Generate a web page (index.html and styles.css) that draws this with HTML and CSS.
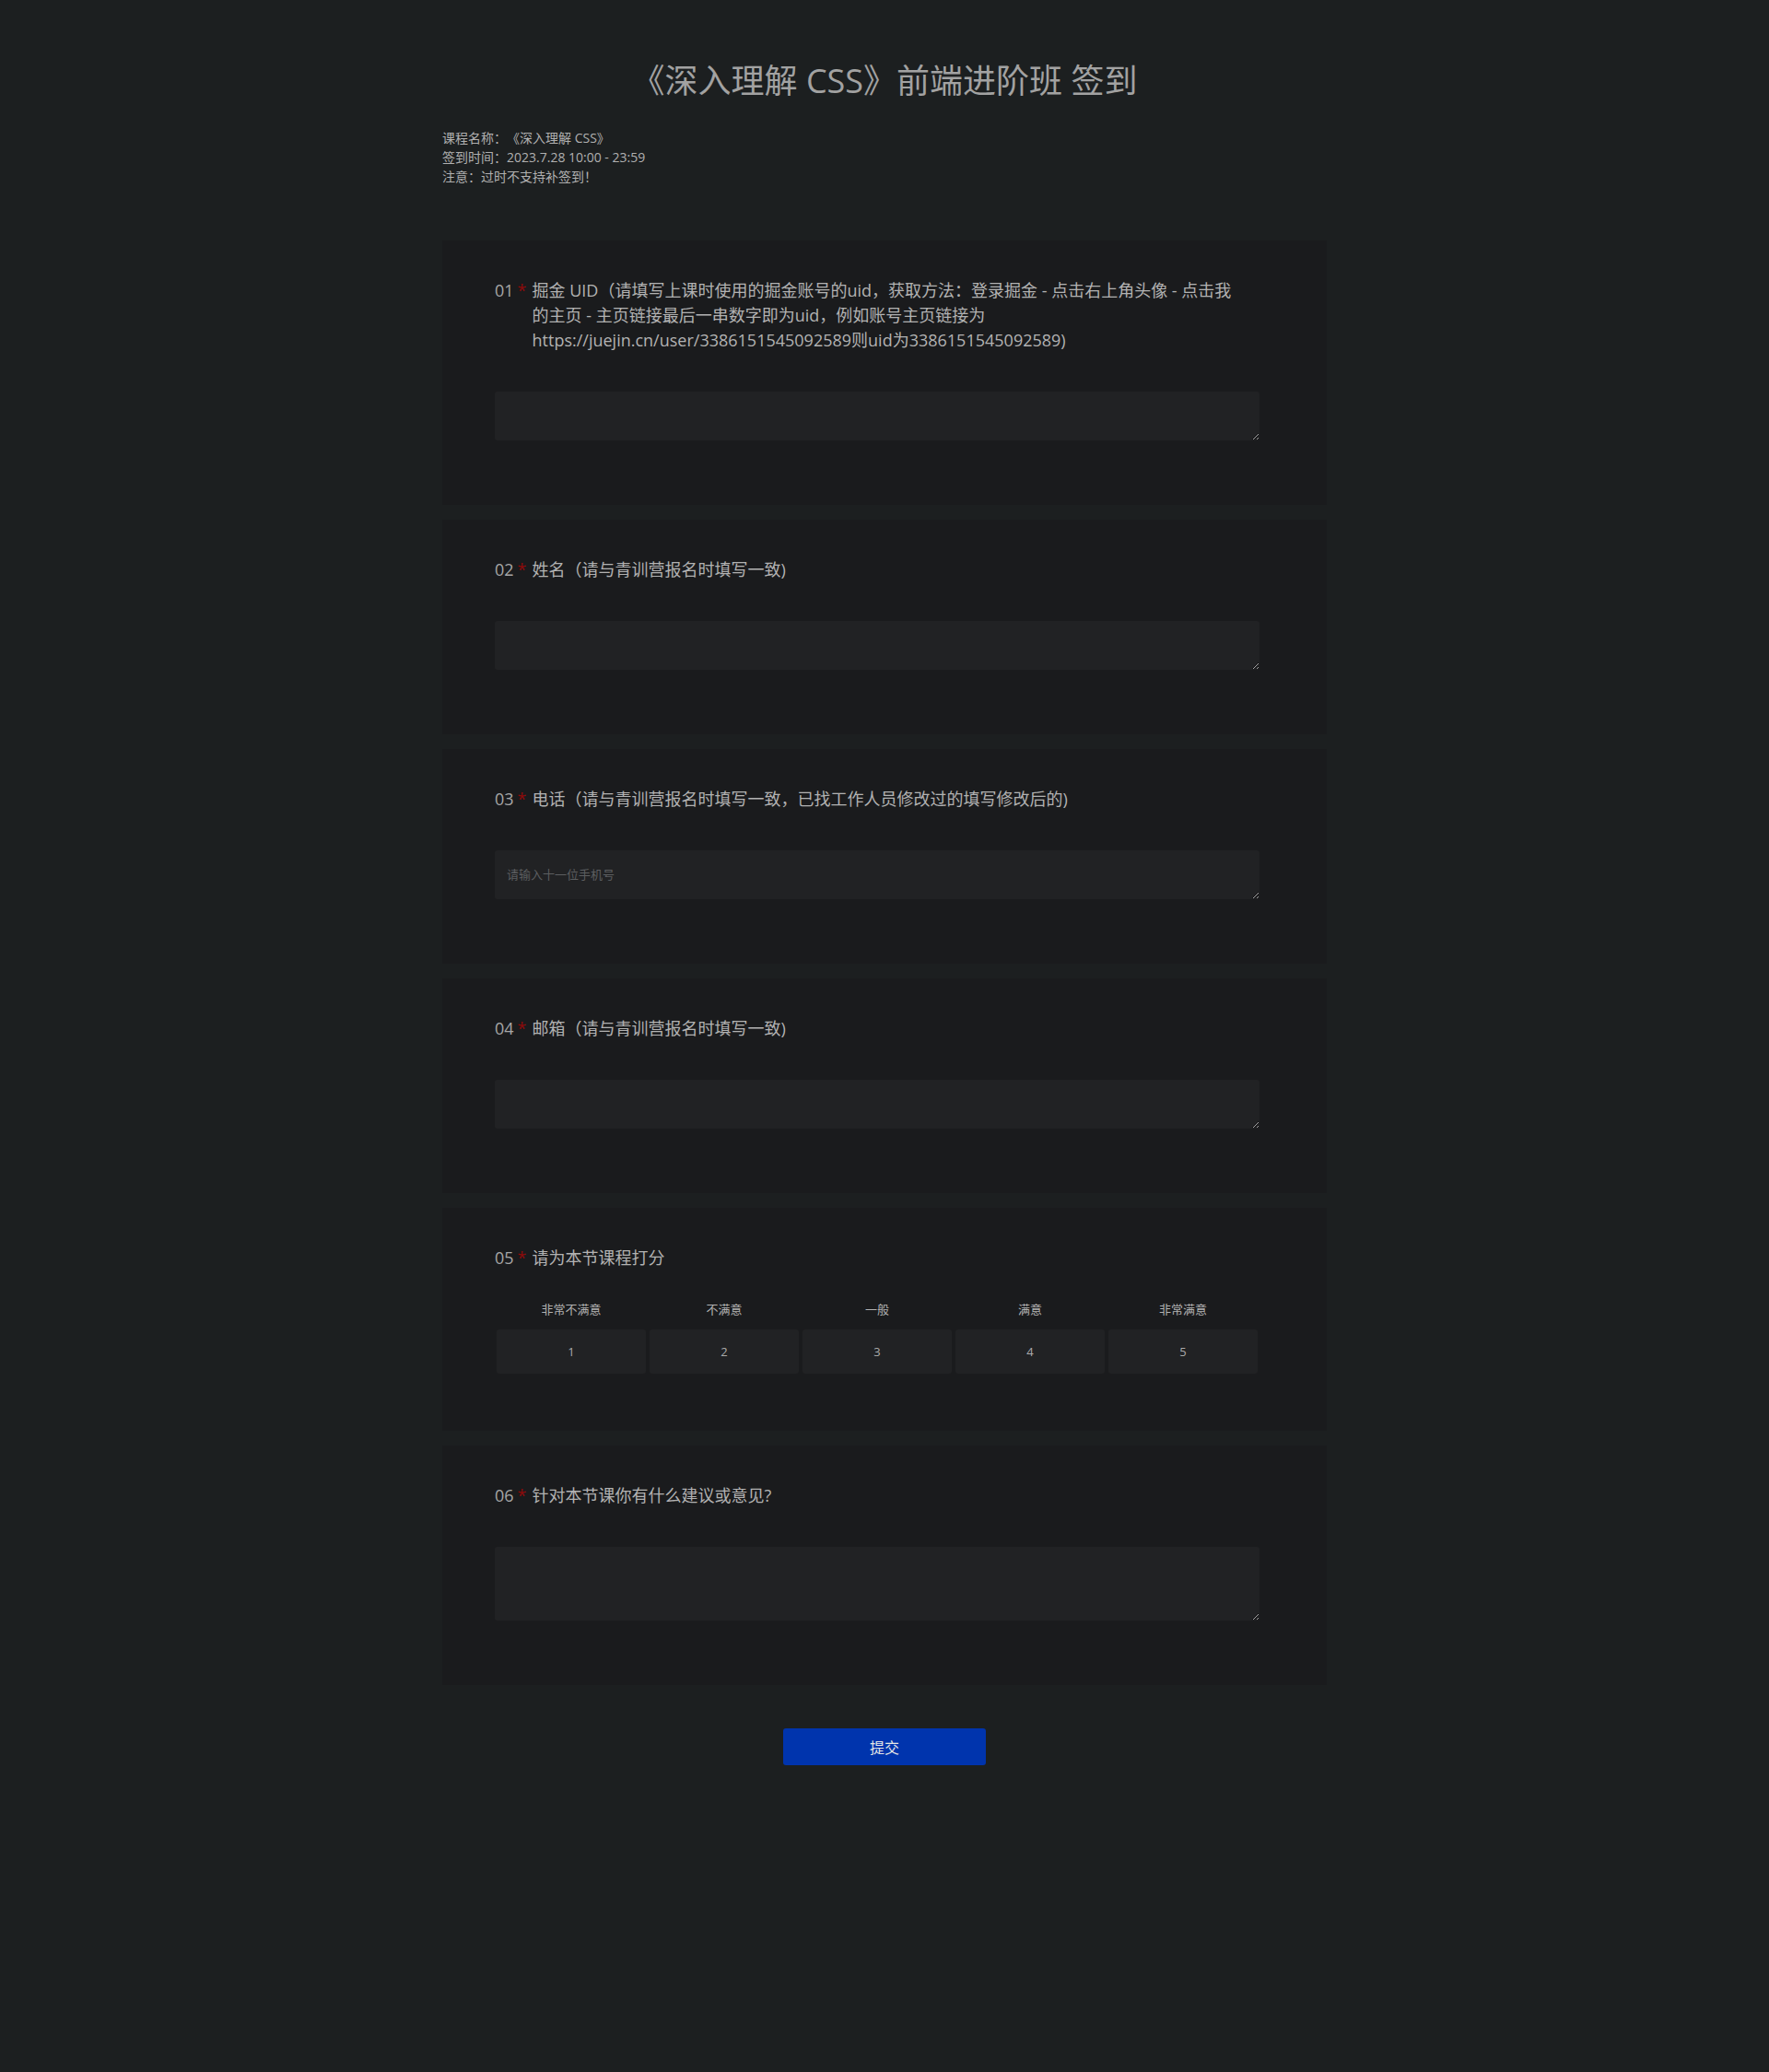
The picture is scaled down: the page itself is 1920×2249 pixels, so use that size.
FILE: index.html
```html
<!DOCTYPE html>
<html lang="zh-CN">
<head>
<meta charset="utf-8">
<title>《深入理解 CSS》前端进阶班 签到</title>
<link rel="stylesheet" href="styles.css">
</head>
<body>
<main class="page">
  <header class="header">
    <h1 class="title">《深入理解 CSS》前端进阶班 签到</h1>
    <div class="meta">
      <p>课程名称：《深入理解 CSS》</p>
      <p>签到时间：2023.7.28 10:00 - 23:59</p>
      <p>注意：过时不支持补签到！</p>
    </div>
  </header>

  <form class="form">
    <section class="card">
      <div class="q-title">
        <span class="q-prefix"><span class="q-no">01</span><span class="q-star">*</span></span>
        <span class="q-text">掘金 UID（请填写上课时使用的掘金账号的uid，获取方法：登录掘金 - 点击右上角头像 - 点击我<br>的主页 - 主页链接最后一串数字即为uid，例如账号主页链接为<br>https://juejin.cn/user/3386151545092589则uid为3386151545092589)</span>
      </div>
      <textarea class="field"></textarea>
    </section>

    <section class="card">
      <div class="q-title">
        <span class="q-prefix"><span class="q-no">02</span><span class="q-star">*</span></span>
        <span class="q-text">姓名（请与青训营报名时填写一致)</span>
      </div>
      <textarea class="field"></textarea>
    </section>

    <section class="card">
      <div class="q-title">
        <span class="q-prefix"><span class="q-no">03</span><span class="q-star">*</span></span>
        <span class="q-text">电话（请与青训营报名时填写一致，已找工作人员修改过的填写修改后的)</span>
      </div>
      <textarea class="field" placeholder="请输入十一位手机号"></textarea>
    </section>

    <section class="card">
      <div class="q-title">
        <span class="q-prefix"><span class="q-no">04</span><span class="q-star">*</span></span>
        <span class="q-text">邮箱（请与青训营报名时填写一致)</span>
      </div>
      <textarea class="field"></textarea>
    </section>

    <section class="card card-rating">
      <div class="q-title">
        <span class="q-prefix"><span class="q-no">05</span><span class="q-star">*</span></span>
        <span class="q-text">请为本节课程打分</span>
      </div>
      <div class="rating">
        <span class="rating-label">非常不满意</span>
        <span class="rating-label">不满意</span>
        <span class="rating-label">一般</span>
        <span class="rating-label">满意</span>
        <span class="rating-label">非常满意</span>
        <button type="button" class="rating-btn">1</button>
        <button type="button" class="rating-btn">2</button>
        <button type="button" class="rating-btn">3</button>
        <button type="button" class="rating-btn">4</button>
        <button type="button" class="rating-btn">5</button>
      </div>
    </section>

    <section class="card">
      <div class="q-title">
        <span class="q-prefix"><span class="q-no">06</span><span class="q-star">*</span></span>
        <span class="q-text">针对本节课你有什么建议或意见?</span>
      </div>
      <textarea class="field field-lg"></textarea>
    </section>

    <div class="actions">
      <button type="button" class="submit">提交</button>
    </div>
  </form>
</main>
</body>
</html>
```

FILE: styles.css
```css
html, body {
  margin: 0;
  background: #1c1f20;
}

body {
  font-family: "Open Sans", "Noto Sans CJK SC", sans-serif;
  min-height: 2249px;
  text-spacing-trim: space-all;
}

.page {
  width: 960px;
  margin: 0 auto;
  padding-top: 61px;
}

.title {
  margin: 0;
  font-size: 36px;
  line-height: 54px;
  font-weight: 400;
  text-align: center;
  color: #a2a2a2;
}

.meta {
  margin-top: 24px;
  font-size: 14px;
  line-height: 21px;
  color: #b0b0b0;
}

.meta p {
  margin: 0;
}

.form {
  margin-top: 59px;
  display: flex;
  flex-direction: column;
  gap: 16px;
}

.card {
  background: #1a1b1d;
  padding: 41px 57px 70px;
}

.q-title {
  display: flex;
  font-size: 18px;
  line-height: 27px;
  color: #b2b2b2;
  margin-bottom: 42px;
}

.q-prefix {
  flex: none;
  color: #a6a6a6;
}

.q-star {
  color: #8e0a0a;
  margin: 0 6px 0 4px;
}

.q-text {
  white-space: nowrap;
}

.field {
  display: block;
  box-sizing: border-box;
  width: 830px;
  height: 53px;
  margin: 0;
  padding: 16px 13px;
  border: 0;
  border-radius: 3px;
  background: #212224;
  color: #b0b0b0;
  font-family: "Open Sans", "Noto Sans CJK SC", sans-serif;
  font-size: 13px;
  line-height: 20px;
  outline: none;
  resize: vertical;
  color-scheme: dark;
}

.field::placeholder {
  color: #5c5e60;
}

.field-lg {
  height: 80px;
}

.card-rating {
  padding-bottom: 62px;
}

.card-rating .q-title {
  margin-bottom: 32px;
}

.rating {
  display: grid;
  grid-template-columns: repeat(5, 162px);
  column-gap: 4px;
  row-gap: 12px;
  margin-left: 2px;
}

.rating-label {
  font-size: 13px;
  line-height: 20px;
  text-align: center;
  color: #b2b2b2;
}

.rating-btn {
  height: 48px;
  margin: 0;
  padding: 0;
  border: 0;
  border-radius: 3px;
  background: #212224;
  color: #ababab;
  font-family: "Open Sans", "Noto Sans CJK SC", sans-serif;
  font-size: 13px;
  cursor: pointer;
}

.actions {
  margin-top: 31px;
  display: flex;
  justify-content: center;
}

.submit {
  width: 220px;
  height: 40px;
  margin: 0;
  border: 0;
  border-radius: 3px;
  background: #0034ad;
  color: #e6e6e6;
  font-family: "Open Sans", "Noto Sans CJK SC", sans-serif;
  font-size: 16px;
  cursor: pointer;
}
```
